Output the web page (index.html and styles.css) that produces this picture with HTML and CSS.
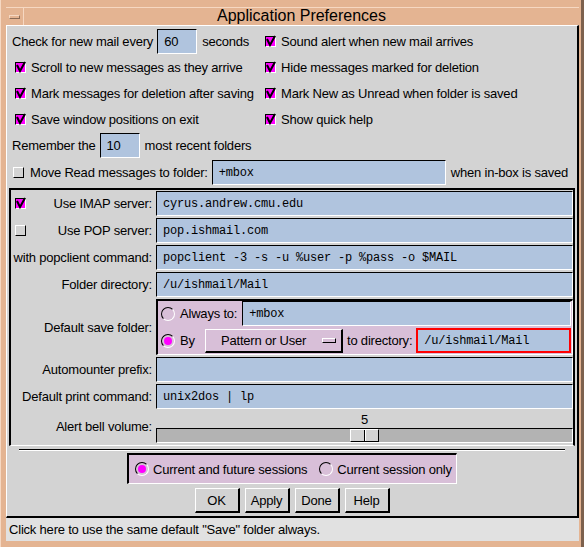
FILE: index.html
```html
<!DOCTYPE html>
<html lang="en">
<head>
  <meta charset="UTF-8">
  <title>Application Preferences</title>
  <link rel="stylesheet" href="styles.css">
</head>
<body>
  <div class="window">
    <div class="titlebar">
      <div class="menu-btn"><span class="menu-bar"></span></div>
      <div class="title">Application Preferences</div>
    </div>

    <div class="content">
      <!-- general options, two columns -->
      <div class="general">
        <div class="row">
          <span>Check for new mail every</span>
          <span class="field num">60</span>
          <span>seconds</span>
        </div>
        <div class="row"><span class="cb on"><svg viewBox="0 0 9 9"><path d="M1 2 L4 8 L9 -1"/></svg></span>Sound alert when new mail arrives</div>

        <div class="row indent"><span class="cb on"><svg viewBox="0 0 9 9"><path d="M1 2 L4 8 L9 -1"/></svg></span>Scroll to new messages as they arrive</div>
        <div class="row"><span class="cb on"><svg viewBox="0 0 9 9"><path d="M1 2 L4 8 L9 -1"/></svg></span>Hide messages marked for deletion</div>

        <div class="row indent"><span class="cb on"><svg viewBox="0 0 9 9"><path d="M1 2 L4 8 L9 -1"/></svg></span>Mark messages for deletion after saving</div>
        <div class="row"><span class="cb on"><svg viewBox="0 0 9 9"><path d="M1 2 L4 8 L9 -1"/></svg></span>Mark New as Unread when folder is saved</div>

        <div class="row indent"><span class="cb on"><svg viewBox="0 0 9 9"><path d="M1 2 L4 8 L9 -1"/></svg></span>Save window positions on exit</div>
        <div class="row"><span class="cb on"><svg viewBox="0 0 9 9"><path d="M1 2 L4 8 L9 -1"/></svg></span>Show quick help</div>
      </div>

      <div class="row wide">
        <span>Remember the</span>
        <span class="field num">10</span>
        <span>most recent folders</span>
      </div>

      <div class="row wide">
        <span class="cb off"></span>
        <span class="move-label">Move Read messages to folder:</span>
        <span class="field folder mono">+mbox</span>
        <span>when in-box is saved</span>
      </div>

      <!-- mail server settings -->
      <div class="group">
        <div class="lbl split"><span class="cb on"><svg viewBox="0 0 9 9"><path d="M1 2 L4 8 L9 -1"/></svg></span><span>Use IMAP server:</span></div>
        <div class="field mono">cyrus.andrew.cmu.edu</div>

        <div class="lbl split"><span class="cb off"></span><span>Use POP server:</span></div>
        <div class="field mono">pop.ishmail.com</div>

        <div class="lbl">with popclient command:</div>
        <div class="field mono">popclient -3 -s -u %user -p %pass -o $MAIL</div>

        <div class="lbl">Folder directory:</div>
        <div class="field mono">/u/ishmail/Mail</div>

        <div class="lbl">Default save folder:</div>
        <div class="savebox">
          <div class="saverow">
            <span class="radio"></span>
            <span class="radio-text">Always to:</span>
            <span class="field mono grow">+mbox</span>
          </div>
          <div class="saverow">
            <span class="radio on"></span>
            <span class="radio-text by">By</span>
            <span class="option">Pattern or User<span class="ind"></span></span>
            <span class="dir-label">to directory:</span>
            <span class="field mono grow focus">/u/ishmail/Mail</span>
          </div>
        </div>

        <div class="lbl">Automounter prefix:</div>
        <div class="field mono"></div>

        <div class="lbl">Default print command:</div>
        <div class="field mono">unix2dos | lp</div>

        <div class="lbl top">Alert bell volume:</div>
        <div class="slider">
          <div class="slider-value">5</div>
          <div class="trough"><span class="thumb" style="left: calc(50% - 15px);"></span></div>
        </div>
      </div>

      <div class="sep"></div>

      <div class="sessions">
        <span class="radio on"></span>
        <span class="radio-text">Current and future sessions</span>
        <span class="radio second"></span>
        <span class="radio-text">Current session only</span>
      </div>

      <div class="buttons">
        <button class="btn">OK</button>
        <button class="btn">Apply</button>
        <button class="btn">Done</button>
        <button class="btn">Help</button>
      </div>
    </div>

    <div class="status">Click here to use the same default "Save" folder always.</div>
  </div>
</body>
</html>
```

FILE: styles.css
```css
body {
  margin: 0;
  font-family: "Liberation Sans", Arial, sans-serif;
  font-size: 13px;
  letter-spacing: -0.2px;
  color: #000;
  background: #e4b492;
}

.window {
  width: 584px;
  height: 547px;
  box-sizing: border-box;
  background: #e4b492;
  border-right: 3px solid #7d614d;
  padding: 7px 2px 6px 6px;
  display: flex;
  flex-direction: column;
  box-shadow: inset 1px 0 #f6d8c2;
}

/* title bar */
.titlebar {
  height: 18px;
  box-sizing: border-box;
  border-top: 1px solid #f6d8c2;
  display: flex;
}

.menu-btn {
  width: 17px;
  border-right: 1px solid #f6d8c2;
  display: flex;
  align-items: center;
  justify-content: center;
}

.menu-bar {
  width: 9px;
  height: 2px;
  border: 1px solid;
  border-color: #f6d8c2 #8a6a55 #8a6a55 #f6d8c2;
}

.title {
  flex: 1;
  text-align: center;
  font-size: 16px;
  letter-spacing: 0;
  line-height: 16px;
}

/* main panel */
.content {
  flex: 1;
  background: #d3d3d3;
  border-top: 1px solid #fff;
  border-left: 1px solid #fff;
  border-right: 2px solid #000;
  border-bottom: 2px solid #000;
  padding-top: 2px;
  display: flex;
  flex-direction: column;
}

.general {
  display: grid;
  grid-template-columns: 253px 1fr;
  padding-left: 5px;
}

.row {
  height: 26px;
  display: flex;
  align-items: center;
  white-space: nowrap;
}

.row .cb {
  margin-right: 5px;
}

.row.indent .cb {
  margin-left: 3px;
}

.row.wide {
  height: 27px;
  padding-left: 5px;
}

.row .field {
  margin: 0 5px 0 4px;
}

.field {
  height: 25px;
  box-sizing: border-box;
  background: #b0c4de;
  border: 1px solid;
  border-color: #000 #fff #fff #000;
  display: flex;
  align-items: center;
  padding-left: 6px;
  white-space: nowrap;
  overflow: hidden;
}

.field.num {
  width: 40px;
}

.field.folder {
  width: 234px;
}

.mono {
  font-family: "Liberation Mono", monospace;
  font-size: 12px;
  letter-spacing: -0.2px;
}

.move-label {
  margin-left: 1px;
}

.row.wide .cb.off {
  margin-left: 1px;
}

/* checkboxes */
.cb {
  display: inline-block;
  width: 9px;
  height: 9px;
  border: 1px solid;
  border-color: #fff #000 #000 #fff;
  background: #d3d3d3;
  flex: none;
}

.cb.on {
  background: #ff00ff;
  border-color: #000 #fff #fff #000;
}

.cb svg {
  display: block;
  width: 9px;
  height: 9px;
  overflow: visible;
  fill: none;
  stroke: #000;
  stroke-width: 2;
}

/* radio buttons */
.radio {
  width: 12px;
  height: 12px;
  border: 1px solid;
  border-color: #000 #fff #fff #000;
  border-radius: 50%;
  flex: none;
  display: flex;
  align-items: center;
  justify-content: center;
}

.radio.on::after {
  content: "";
  width: 8px;
  height: 8px;
  border-radius: 50%;
  background: #ff00ff;
}

.radio-text {
  margin-left: 4px;
  white-space: nowrap;
}

/* server group */
.group {
  margin: 2px 2px 0 2px;
  border: 2px solid #000;
  border-bottom: 1px solid #fff;
  padding: 1px 0 2px 0;
  display: grid;
  grid-template-columns: 141px 417px;
  column-gap: 4px;
  row-gap: 2px;
}

.lbl {
  display: flex;
  align-items: center;
  justify-content: flex-end;
  white-space: nowrap;
}

.lbl.split {
  justify-content: space-between;
  padding-left: 4px;
}

.lbl.top {
  align-items: flex-start;
  padding-top: 8px;
}

.savebox {
  height: 56px;
  box-sizing: border-box;
  background: #d8bfd8;
  border-top: 2px solid #000;
  border-left: 2px solid #000;
  border-right: 1px solid #fff;
  border-bottom: 1px solid #fff;
  padding: 0 1px 0 3px;
  display: flex;
  flex-direction: column;
  gap: 2px;
}

.saverow {
  height: 25px;
  display: flex;
  align-items: center;
}

.saverow .radio-text {
  margin-left: 5px;
}

.saverow .radio-text.by {
  width: 25px;
}

.grow {
  flex: 1;
  margin-left: 5px;
}

.field.focus {
  border: 2px solid #ff0000;
  padding-left: 6px;
  margin-left: 4px;
}

.option {
  width: 138px;
  height: 24px;
  box-sizing: border-box;
  border: 1px solid;
  border-color: #fff #000 #000 #fff;
  border-width: 1px 2px 2px 1px;
  display: flex;
  align-items: center;
  padding-left: 15px;
  white-space: nowrap;
}

.ind {
  margin-left: auto;
  margin-right: 5px;
  width: 12px;
  height: 3px;
  border: 1px solid;
  border-color: #fff #000 #000 #fff;
}

.dir-label {
  margin-left: 4px;
  white-space: nowrap;
}

/* volume slider */
.slider {
  display: flex;
  flex-direction: column;
}

.slider-value {
  height: 16px;
  line-height: 16px;
  margin-top: 1px;
  text-align: center;
}

.trough {
  position: relative;
  height: 15px;
  box-sizing: border-box;
  background: #b3b3b3;
  border: 1px solid;
  border-color: #000 #fff #fff #000;
}

.thumb {
  position: absolute;
  top: 0;
  width: 29px;
  height: 13px;
  box-sizing: border-box;
  background: #d3d3d3;
  border: 1px solid;
  border-color: #fff #000 #000 #fff;
}

.thumb::after {
  content: "";
  position: absolute;
  left: 13px;
  top: 0;
  width: 1px;
  height: 11px;
  background: #000;
  border-right: 1px solid #fff;
}

.sep {
  margin: 3px 12px 0;
  border-top: 1px solid #000;
  border-bottom: 1px solid #fff;
}

/* session radio box */
.sessions {
  align-self: center;
  width: 330px;
  height: 31px;
  box-sizing: border-box;
  margin-top: 2px;
  background: #d8bfd8;
  border: 2px solid #000;
  border-right: 1px solid #fff;
  border-bottom: 1px solid #fff;
  padding-left: 6px;
  display: flex;
  align-items: center;
}

.sessions .radio.second {
  margin-left: 12px;
}

.buttons {
  display: flex;
  justify-content: center;
  gap: 5px;
  margin-top: 4px;
}

.btn {
  width: 45px;
  height: 25px;
  padding: 0;
  background: #d3d3d3;
  font-family: "Liberation Sans", Arial, sans-serif;
  font-size: 13px;
  letter-spacing: -0.2px;
  color: #000;
  border: 1px solid;
  border-color: #fff #000 #000 #fff;
  border-width: 1px 2px 2px 1px;
}

/* status line */
.status {
  height: 23px;
  line-height: 23px;
  background: #e1e1e1;
  padding-left: 3px;
  white-space: nowrap;
}
```
